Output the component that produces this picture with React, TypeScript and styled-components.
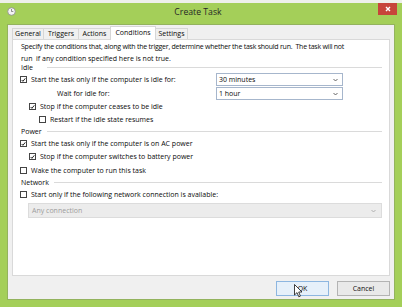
import React from "react";
import styled, { createGlobalStyle } from "styled-components";

const FONT = `"Open Sans", "Noto Sans", "Liberation Sans", sans-serif`;

const GlobalStyle = createGlobalStyle`
  html, body { margin: 0; padding: 0; background: #eef0ea; }
  body { font-family: ${FONT}; }
  * { box-sizing: border-box; }
`;

const Screen = styled.div`
  position: relative;
  width: 402px;
  height: 307px;
  padding-top: 3px;
  background: #eef0ea;
  overflow: hidden;
`;

const Window = styled.div`
  height: 304px;
  background: #a4cf59;
  display: flex;
  flex-direction: column;
`;

const TitleBar = styled.div`
  height: 21px;
  flex: none;
  display: grid;
  grid-template-columns: 1fr auto 1fr;
  align-items: start;
  padding: 0 5px 0 7px;
`;

const AppIcon = styled.svg`
  margin-top: 4px;
  width: 9px;
  height: 9px;
`;

const Title = styled.div`
  margin: 3px 8px 0 0;
  font-family: ${FONT};
  font-size: 8.7px;
  line-height: 12px;
  color: #262626;
  white-space: nowrap;
`;

const CloseButton = styled.div`
  justify-self: end;
  width: 19px;
  height: 12px;
  background: #c7453a;
  display: flex;
  align-items: center;
  justify-content: center;
`;

const Client = styled.div`
  flex: 1;
  margin: 0 7px 7px;
  border: 1px solid #93b35e;
  background: #f0f0f0;
  padding: 3px 4px;
  display: flex;
  flex-direction: column;
`;

const TabStrip = styled.div`
  height: 11px;
  flex: none;
  display: flex;
  align-items: flex-end;
  position: relative;
  z-index: 1;
`;

const Tab = styled.div<{ $w: number; $active?: boolean }>`
  width: ${(p) => p.$w}px;
  height: ${(p) => (p.$active ? 14 : 11)}px;
  margin-bottom: ${(p) => (p.$active ? -1 : 0)}px;
  margin-left: -1px;
  &:first-child { margin-left: 0; }
  border: 1px solid #d6d6d6;
  border-bottom: none;
  background: ${(p) => (p.$active ? "#ffffff" : "#f0f0f0")};
  font-size: 7px;
  line-height: ${(p) => (p.$active ? 11 : 10)}px;
  text-align: center;
  color: #0a0a0a;
  white-space: nowrap;
`;

const Panel = styled.div`
  flex: 1;
  background: #ffffff;
  border: 1px solid #d9d9d9;
  padding: 0 7px;
  display: flex;
  flex-direction: column;
  font-size: 7px;
  color: #0a0a0a;
`;

const Desc = styled.div`
  margin: 1px 0 -3px;
  padding-left: 1px;
  line-height: 12px;
  white-space: nowrap;
  display: flex;
  flex-direction: column;
`;

const DescLine = styled.span<{ $tight?: boolean }>`
  letter-spacing: ${(p) => (p.$tight ? "-0.24px" : "0")};
`;

const GroupHeader = styled.div`
  height: 11px;
  display: flex;
  align-items: center;
  gap: 5px;
  padding-left: 1px;
`;

const GroupLabel = styled.span`
  min-width: 21px;
  white-space: nowrap;
`;

const Rule = styled.div`
  flex: 1;
  height: 1px;
  background: #dadada;
`;

const Row = styled.div<{ $indent?: number; $mt?: number }>`
  height: 13px;
  margin-top: ${(p) => p.$mt ?? 0}px;
  padding-left: ${(p) => p.$indent ?? 0}px;
  display: flex;
  align-items: center;
  white-space: nowrap;
`;

const SelectRow = styled.div<{ $mt?: number }>`
  height: 13px;
  margin-top: ${(p) => p.$mt ?? 0}px;
  display: grid;
  grid-template-columns: 196px 127px;
  align-items: center;
  white-space: nowrap;
`;

const Indented = styled.div<{ $indent: number }>`
  padding-left: ${(p) => p.$indent}px;
  display: flex;
  align-items: center;
`;

const Box = styled.span`
  width: 7px;
  height: 7px;
  border: 1px solid #444;
  background: #fff;
  flex: none;
  display: flex;
  align-items: center;
  justify-content: center;
  margin-right: 4px;
`;

const Select = styled.div`
  height: 13px;
  border: 1px solid #a6b6cc;
  background: #fff;
  display: flex;
  align-items: center;
  justify-content: space-between;
  padding: 0 4px 0 2px;
`;

const DisabledSelect = styled.div`
  height: 15px;
  margin: 2px 0 0 8px;
  border: 1px solid #dcdcdc;
  background: #ececec;
  color: #9c9c9c;
  display: flex;
  align-items: center;
  justify-content: space-between;
  padding: 0 5px 0 3px;
`;

const ButtonRow = styled.div`
  flex: none;
  margin-top: 5px;
  display: flex;
  justify-content: flex-end;
  gap: 8px;
`;

const Button = styled.div<{ $default?: boolean }>`
  width: 53px;
  height: 15px;
  border: 1px solid ${(p) => (p.$default ? "#8db6e0" : "#b3b3b3")};
  background: ${(p) => (p.$default ? "#e6f0fa" : "#e9e9e9")};
  font-size: 7px;
  line-height: 13px;
  text-align: center;
  color: #111;
`;

const Cursor = styled.svg`
  position: absolute;
  left: 294px;
  top: 284px;
  width: 9px;
  height: 14px;
`;

const Chevron = ({ color = "#555" }: { color?: string }) => (
  <svg width="5" height="4" viewBox="0 0 5 4">
    <polyline points="0.5,1 2.5,3 4.5,1" fill="none" stroke={color} strokeWidth="0.9" />
  </svg>
);

const Check = ({ checked }: { checked?: boolean }) => (
  <Box>
    {checked && (
      <svg width="6" height="6" viewBox="0 0 6 6">
        <polyline points="0.8,3 2.3,4.6 5.2,1" fill="none" stroke="#222" strokeWidth="1.2" />
      </svg>
    )}
  </Box>
);

const tabs = [
  { label: "General", w: 32 },
  { label: "Triggers", w: 36 },
  { label: "Actions", w: 33 },
  { label: "Conditions", w: 46, active: true },
  { label: "Settings", w: 33 },
];

export default function App() {
  return (
    <>
      <GlobalStyle />
      <Screen>
        <Window>
          <TitleBar>
            <AppIcon viewBox="0 0 9 9">
              <circle cx="4.5" cy="4.5" r="3.8" fill="#f4f4f4" stroke="#8a8a8a" strokeWidth="0.8" />
              <polyline points="4.5,2 4.5,4.5 6.3,4.5" fill="none" stroke="#666" strokeWidth="0.7" />
            </AppIcon>
            <Title>Create Task</Title>
            <CloseButton>
              <svg width="6" height="6" viewBox="0 0 6 6">
                <path d="M1 1 L5 5 M5 1 L1 5" stroke="#fff" strokeWidth="1.4" />
              </svg>
            </CloseButton>
          </TitleBar>
          <Client>
            <TabStrip>
              {tabs.map((t) => (
                <Tab key={t.label} $w={t.w} $active={t.active}>
                  {t.label}
                </Tab>
              ))}
            </TabStrip>
            <Panel>
              <Desc>
                <DescLine $tight>
                  Specify the conditions that, along with the trigger, determine whether the task should run.&nbsp; The task will not
                </DescLine>
                <DescLine>run&nbsp; if any condition specified here is not true.</DescLine>
              </Desc>
              <GroupHeader>
                <GroupLabel>Idle</GroupLabel>
                <Rule />
              </GroupHeader>
              <SelectRow>
                <Indented $indent={0}>
                  <Check checked />
                  Start the task only if the computer is idle for:
                </Indented>
                <Select>
                  <span>30 minutes</span>
                  <Chevron />
                </Select>
              </SelectRow>
              <SelectRow $mt={1}>
                <Indented $indent={37}>Wait for idle for:</Indented>
                <Select>
                  <span>1 hour</span>
                  <Chevron />
                </Select>
              </SelectRow>
              <Row $indent={9}>
                <Check checked />
                Stop if the computer ceases to be idle
              </Row>
              <Row $indent={19}>
                <Check />
                Restart if the idle state resumes
              </Row>
              <GroupHeader>
                <GroupLabel>Power</GroupLabel>
                <Rule />
              </GroupHeader>
              <Row>
                <Check checked />
                Start the task only if the computer is on AC power
              </Row>
              <Row $indent={9}>
                <Check checked />
                Stop if the computer switches to battery power
              </Row>
              <Row $mt={1}>
                <Check />
                Wake the computer to run this task
              </Row>
              <GroupHeader>
                <GroupLabel>Network</GroupLabel>
                <Rule />
              </GroupHeader>
              <Row>
                <Check />
                Start only if the following network connection is available:
              </Row>
              <DisabledSelect>
                <span>Any connection</span>
                <Chevron color="#aaa" />
              </DisabledSelect>
            </Panel>
            <ButtonRow>
              <Button $default>OK</Button>
              <Button>Cancel</Button>
            </ButtonRow>
          </Client>
        </Window>
        <Cursor viewBox="0 0 9 14">
          <path d="M0.5 0.5 L0.5 11 L3 8.6 L4.8 12.8 L6.4 12.1 L4.7 8 L8 8 Z" fill="#fff" stroke="#111" strokeWidth="0.8" />
        </Cursor>
      </Screen>
    </>
  );
}
